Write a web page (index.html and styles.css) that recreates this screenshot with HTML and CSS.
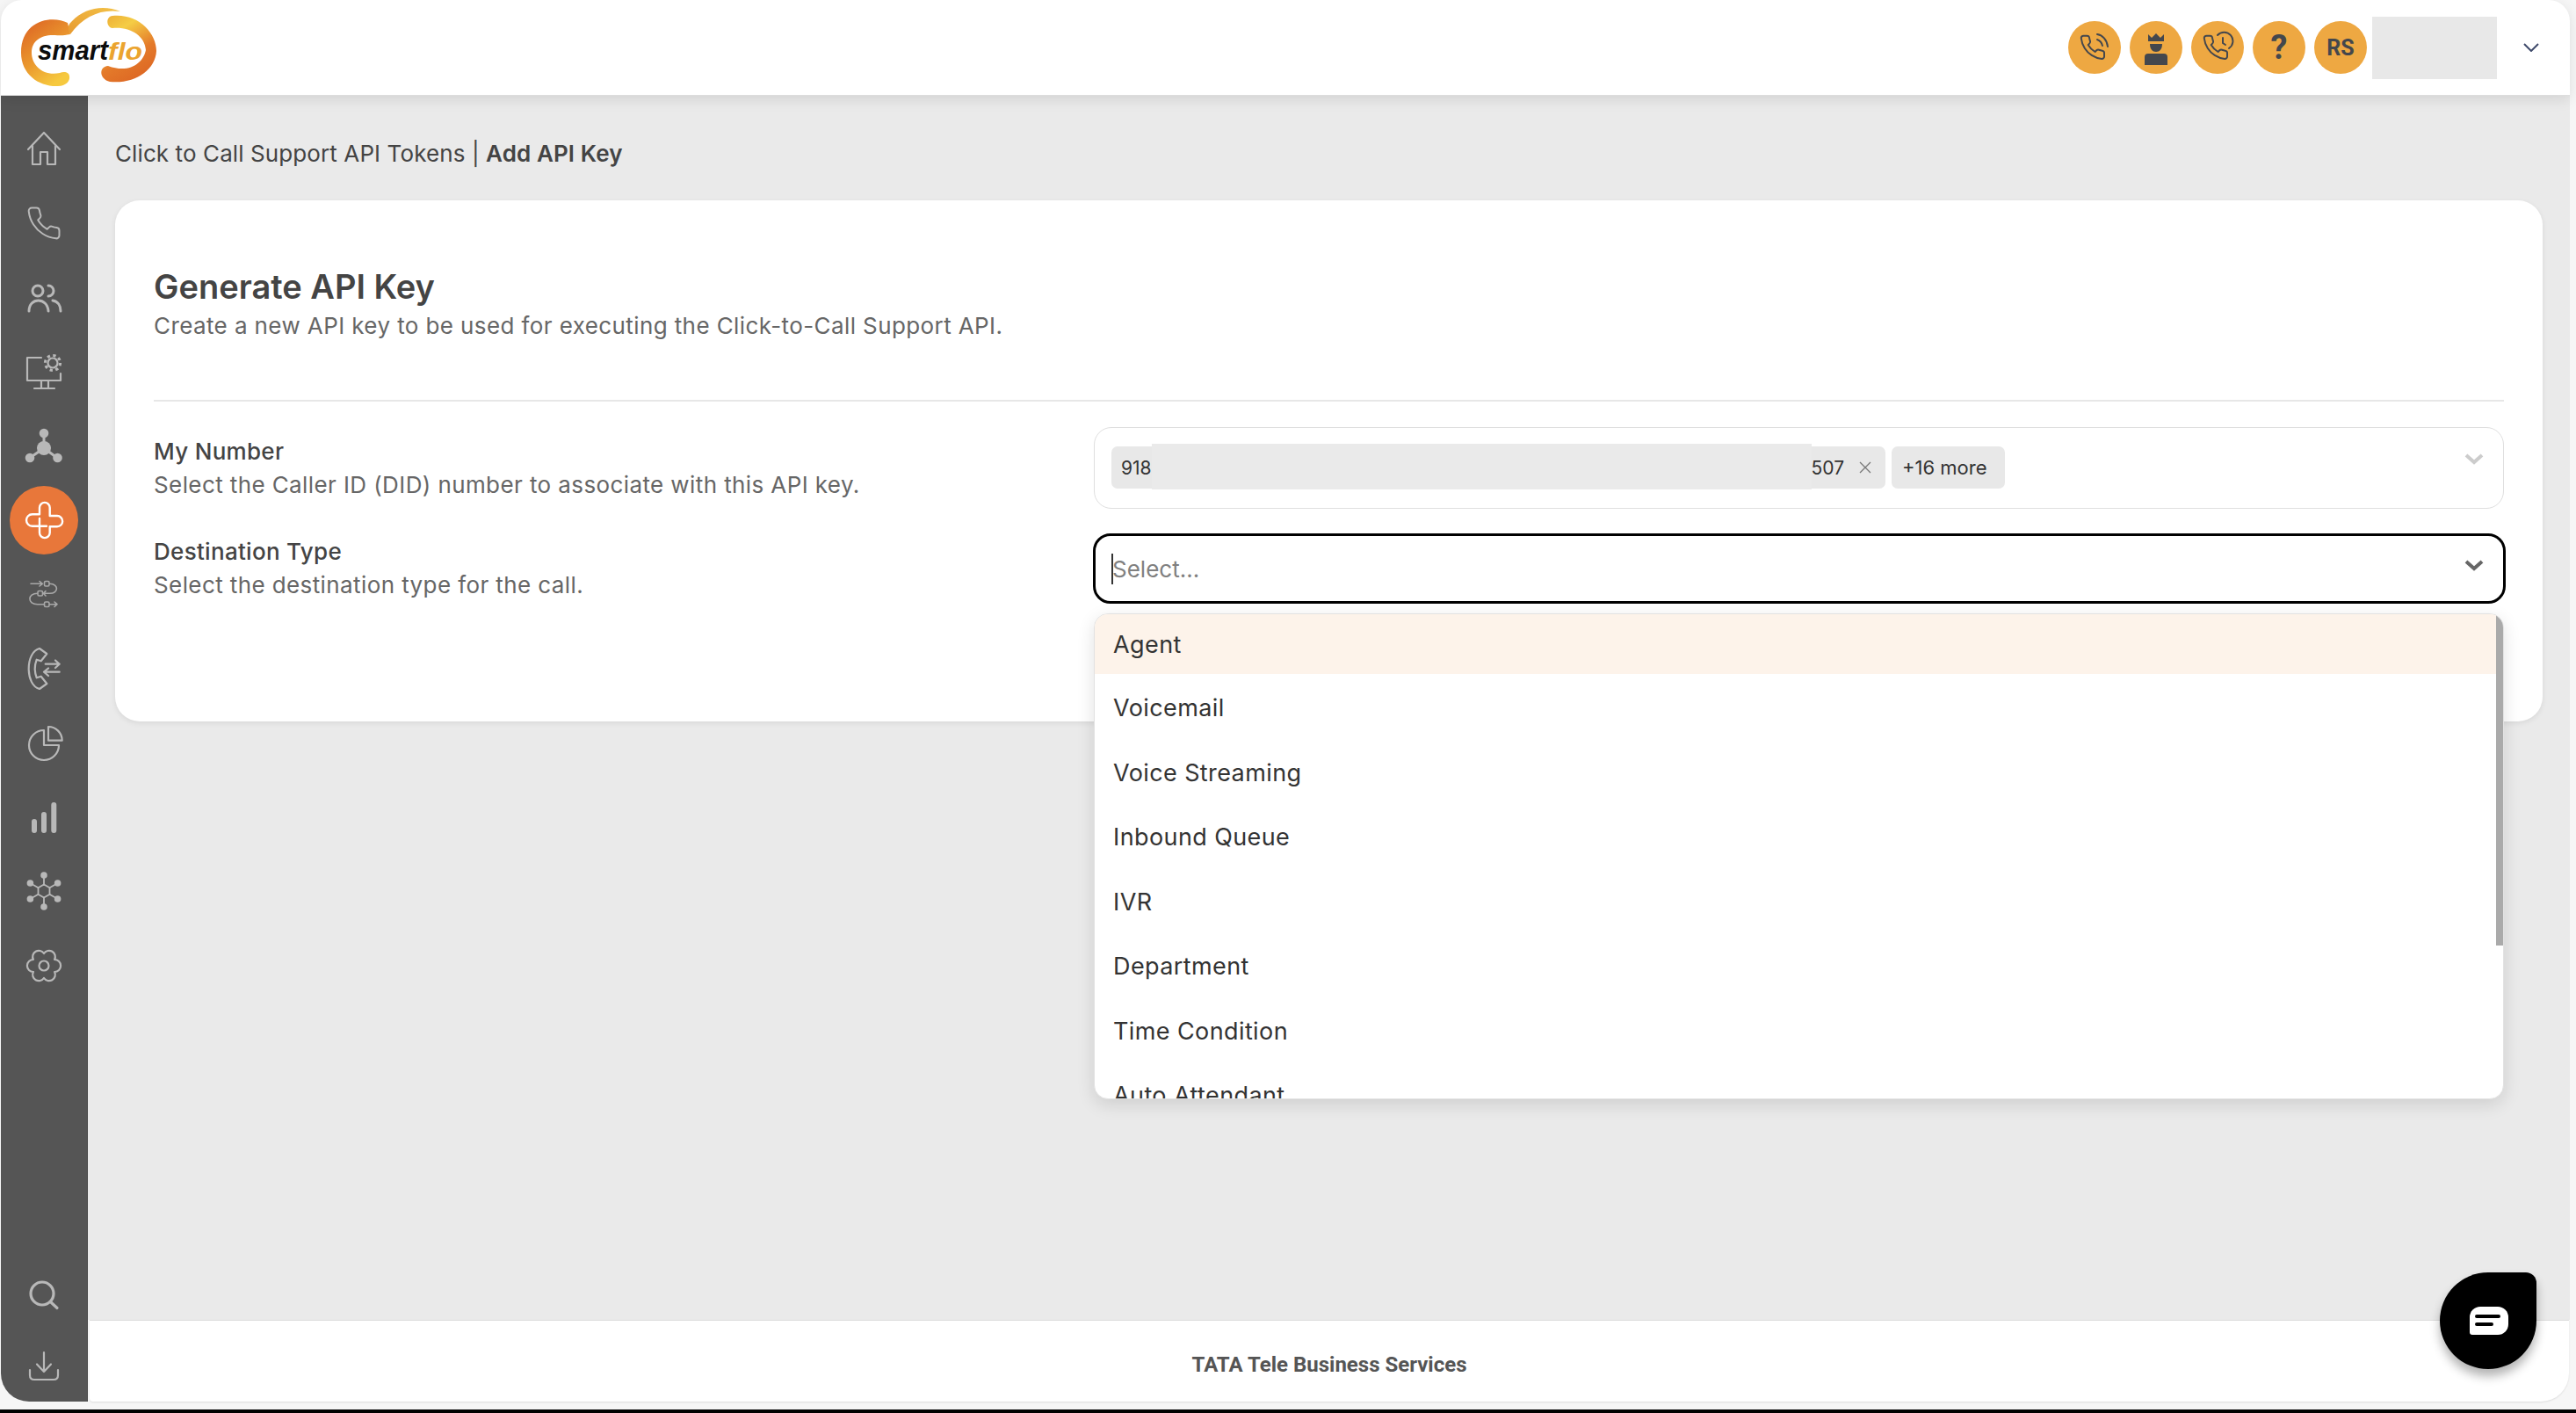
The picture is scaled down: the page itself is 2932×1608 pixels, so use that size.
FILE: index.html
```html
<!DOCTYPE html>
<html lang="en">
<head>
    <meta charset="UTF-8">
    <title>Add API Key</title>
    <link rel="stylesheet" href="styles.css">
</head>
<body>
    <div class="window">
        <header class="topbar">
            <svg class="logo" viewBox="0 0 200 109" width="200" height="109">
                <defs>
                    <linearGradient id="logoLeft" x1="0.1" y1="0.1" x2="0.6" y2="1">
                        <stop offset="0" stop-color="#de6a25"/>
                        <stop offset="0.55" stop-color="#eb9a2e"/>
                        <stop offset="1" stop-color="#f6c93f"/>
                    </linearGradient>
                    <linearGradient id="logoSwoosh" x1="0" y1="1" x2="1" y2="0">
                        <stop offset="0" stop-color="#e79a30"/>
                        <stop offset="1" stop-color="#f3c247"/>
                    </linearGradient>
                    <linearGradient id="logoRight" x1="0" y1="0" x2="0.5" y2="1">
                        <stop offset="0" stop-color="#eba934"/>
                        <stop offset="0.3" stop-color="#f5cd45"/>
                        <stop offset="0.7" stop-color="#e47a2a"/>
                        <stop offset="1" stop-color="#de6a25"/>
                    </linearGradient>
                </defs>
                <path fill="url(#logoLeft)" d="M80 39C70 41 68 40 60 40C46 40 36 47 36 60C36 75 50 87 68 83C73 81 79 82 79 87C80 92 75 98 66 98C45 99 24 85 24 60C24 22 60 17 77 26Z"/>
                <path fill="url(#logoSwoosh)" d="M80 39C76 30 78 28 82 24C96 9 118 5 137 13C115 10 95 18 80 39Z"/>
                <path fill="url(#logoRight)" d="M128 18C157 15 178 37 178 58C177 80 153 96 125 93C113 90 112 76 123 75C147 84 163 72 166 57C165 40 147 30 128 32C121 31 120 19 128 18Z"/>
                <text class="logo-smart" x="43" y="68" textLength="80" lengthAdjust="spacingAndGlyphs">smart</text>
                <text class="logo-flo" x="123" y="68" textLength="39" lengthAdjust="spacingAndGlyphs">flo</text>
            </svg>
            <div class="topbar-right">
                <span class="round-btn">
                    <svg viewBox="0 0 60 60" width="60" height="60" class="dark-line">
                        <path transform="translate(12 14) scale(1.32)" d="M22 16.92v3a2 2 0 0 1-2.18 2 19.79 19.79 0 0 1-8.63-3.07 19.5 19.5 0 0 1-6-6 19.79 19.79 0 0 1-3.07-8.67A2 2 0 0 1 4.11 2h3a2 2 0 0 1 2 1.72 12.84 12.84 0 0 0 .7 2.81 2 2 0 0 1-.45 2.11L8.09 9.91a16 16 0 0 0 6 6l1.27-1.27a2 2 0 0 1 2.11-.45 12.84 12.84 0 0 0 2.81.7A2 2 0 0 1 22 16.92z"/>
                        <path d="M33 15C39 16 44 21 45 29"/>
                        <path d="M33 21C36 22 38 24 39 28"/>
                    </svg>
                </span>
                <span class="round-btn">
                    <svg viewBox="0 0 60 60" width="60" height="60" class="dark-fill">
                        <path d="M21 15L25 19L30 14L35 19L39 15V23H21Z"/>
                        <path d="M23 26H37C37 32 34 35 30 35C26 35 23 32 23 26Z"/>
                        <path d="M17 50V41Q17 37 21 37H39Q43 37 43 41V50Z"/>
                    </svg>
                </span>
                <span class="round-btn">
                    <svg viewBox="0 0 60 60" width="60" height="60" class="dark-line">
                        <path transform="translate(12 14) scale(1.32)" d="M22 16.92v3a2 2 0 0 1-2.18 2 19.79 19.79 0 0 1-8.63-3.07 19.5 19.5 0 0 1-6-6 19.79 19.79 0 0 1-3.07-8.67A2 2 0 0 1 4.11 2h3a2 2 0 0 1 2 1.72 12.84 12.84 0 0 0 .7 2.81 2 2 0 0 1-.45 2.11L8.09 9.91a16 16 0 0 0 6 6l1.27-1.27a2 2 0 0 1 2.11-.45 12.84 12.84 0 0 0 2.81.7A2 2 0 0 1 22 16.92z"/>
                        <path d="M30 16A10 10 0 1 1 43 31"/>
                        <path d="M36 19V25L39 27"/>
                    </svg>
                </span>
                <span class="round-btn round-help">?</span>
                <span class="round-btn round-text">RS</span>
                <span class="user-mask"></span>
                <svg class="user-chevron" viewBox="0 0 18 10" width="18" height="10"><path d="M1 1L9 9L17 1"/></svg>
            </div>
        </header>

        <div class="frame">
            <aside class="sidebar">
                <nav class="nav-top">
                    <a class="nav-item">
                        <svg viewBox="0 0 48 48" width="48" height="48"><path d="M6 25L24 6L42 25"/><path d="M11 21V42H20V28H28V42H37V21"/></svg>
                    </a>
                    <a class="nav-item">
                        <svg viewBox="0 0 48 48" width="48" height="48"><path transform="translate(3 3) scale(1.75)" stroke-width="1.15" d="M22 16.92v3a2 2 0 0 1-2.18 2 19.79 19.79 0 0 1-8.63-3.07 19.5 19.5 0 0 1-6-6 19.79 19.79 0 0 1-3.07-8.67A2 2 0 0 1 4.11 2h3a2 2 0 0 1 2 1.72 12.84 12.84 0 0 0 .7 2.81 2 2 0 0 1-.45 2.11L8.09 9.91a16 16 0 0 0 6 6l1.27-1.27a2 2 0 0 1 2.11-.45 12.84 12.84 0 0 0 2.81.7A2 2 0 0 1 22 16.92z"/></svg>
                    </a>
                    <a class="nav-item">
                        <svg class="medium" viewBox="0 0 48 48" width="48" height="48"><circle cx="17" cy="17" r="6"/><path d="M7 40C7 24 28 24 29 40"/><path d="M29 11A6 6 0 0 1 29 23"/><path d="M34 28C40 29 43 34 43 40"/></svg>
                    </a>
                    <a class="nav-item">
                        <svg viewBox="0 0 48 48" width="48" height="48"><path d="M21 8H5V34H43V26"/><path d="M21 34V43M29 34V43M13 43H36"/><circle cx="34" cy="14" r="5.5"/><circle class="gear-teeth" cx="34" cy="14" r="8.5"/></svg>
                    </a>
                    <a class="nav-item">
                        <svg class="solid" viewBox="0 0 48 48" width="48" height="48"><path class="solid-link" d="M24 10V27L8 38M24 27L39 38"/><circle cx="24" cy="27" r="8"/><circle cx="24" cy="10" r="5.3"/><circle cx="8" cy="38" r="5.3"/><circle cx="39.500" cy="38" r="5.3"/></svg>
                    </a>
                    <a class="nav-item nav-active">
                        <svg viewBox="0 0 48 48" width="48" height="48"><path d="M27 30.700H10.700A6.700 6.700 0 0 1 10.700 17.300H19V9.700A5.850 5.850 0 0 1 30.700 9.700V19H39A6.150 6.150 0 0 1 39 31.300H30.700V38.300A5.850 5.850 0 0 1 19 38.300V22"/></svg>
                    </a>
                    <a class="nav-item">
                        <svg class="thin" viewBox="0 0 48 48" width="48" height="48"><path d="M9 12.300H22M19 9.500L22.300 12.300L19 15"/><rect x="24.500" y="9.500" width="5.500" height="5.500" rx="1.500"/><path d="M30.700 12.300C41 12.300 41 23.300 30.700 23.300H23.300M26 20.700L23.300 23.300L26 26"/><rect x="17" y="20.500" width="5.500" height="5.500" rx="1.500"/><path d="M16.700 23.300C5 23.300 5 35.700 16.700 35.700H24.500"/><rect x="24.500" y="33" width="5.500" height="5.500" rx="1.500"/><path d="M30.500 35.700H39M36 33L39 35.700L36 38.500"/></svg>
                    </a>
                    <a class="nav-item">
                        <svg viewBox="0 0 48 48" width="48" height="48"><path d="M19 1C11 3 6.700 13 6.700 24C6.700 35 11 45 19 47L27.300 41L20.700 32.700L15.700 34.300C13.300 28 13.300 20 15.700 13.700L20.700 15.300L27.300 7Z"/><path d="M25.700 18.700H41.700M37 14.500L41.700 18.700L37 23"/><path d="M41.700 27.700H24M29 23.500L24 27.700L29 32"/></svg>
                    </a>
                    <a class="nav-item">
                        <svg viewBox="0 0 48 48" width="48" height="48"><path d="M24 10A17 17 0 1 0 41 27H24Z"/><path d="M29 6A15.700 15.700 0 0 1 44.700 21.700H29Z"/></svg>
                    </a>
                    <a class="nav-item">
                        <svg class="bars" viewBox="0 0 48 48" width="48" height="48"><path d="M13 29V39M24 21V39M35.300 10V39"/></svg>
                    </a>
                    <a class="nav-item">
                        <svg viewBox="0 0 48 48" width="48" height="48"><path stroke-width="1.800" d="M24 16.500L30.500 20.250V27.750L24 31.500L17.500 27.750V20.250Z"/><path stroke-width="1.800" d="M24 16.500V6M30.500 20.250L39.600 15M30.500 27.750L39.600 33M24 31.500V42M17.500 27.750L8.400 33M17.500 20.250L8.400 15"/><g class="node-dots"><circle cx="24" cy="6" r="3.800"/><circle cx="39.600" cy="15" r="3.800"/><circle cx="39.600" cy="33" r="3.800"/><circle cx="24" cy="42" r="3.800"/><circle cx="8.400" cy="33" r="3.800"/><circle cx="8.400" cy="15" r="3.800"/></g></svg>
                    </a>
                    <a class="nav-item">
                        <svg viewBox="0 0 48 48" width="48" height="48"><path d="M36.100 17A7 7 0 0 1 36.100 31A7 7 0 0 1 24 38A7 7 0 0 1 11.900 31A7 7 0 0 1 11.900 17A7 7 0 0 1 24 10A7 7 0 0 1 36.100 17Z"/><circle cx="24" cy="24" r="5.500"/></svg>
                    </a>
                </nav>
                <nav class="nav-bottom">
                    <a class="nav-item nav-item-low">
                        <svg class="heavy" viewBox="0 0 48 48" width="48" height="48"><circle cx="22" cy="23" r="13"/><path d="M32 33L39 39.500"/></svg>
                    </a>
                    <a class="nav-item nav-item-low">
                        <svg viewBox="0 0 48 48" width="48" height="48"><path d="M24 9V31M16 22.500L24 31L32 22.500"/><path d="M8 29V35Q8 40 13 40H35Q40 40 40 35V29"/></svg>
                    </a>
                </nav>
            </aside>

            <div class="main">
                <main class="content">
                    <div class="breadcrumb">Click to Call Support API Tokens | <b>Add API Key</b></div>
                    <section class="card">
                        <h1>Generate API Key</h1>
                        <p class="lead">Create a new API key to be used for executing the Click-to-Call Support API.</p>
                        <hr class="divider">
                        <div class="form-row">
                            <div class="field-text">
                                <label>My Number</label>
                                <p>Select the Caller ID (DID) number to associate with this API key.</p>
                            </div>
                            <div class="select-box">
                                <span class="chip chip-number">
                                    <span>918</span>
                                    <span class="number-mask"></span>
                                    <span>507</span>
                                    <svg class="chip-x" viewBox="0 0 16 16" width="16" height="16"><path d="M2 2L14 14M14 2L2 14"/></svg>
                                </span>
                                <span class="chip">+16 more</span>
                                <svg class="select-chevron chevron-light" viewBox="0 0 22 13" width="22" height="13"><path d="M2 2L11 10L20 2"/></svg>
                            </div>
                        </div>
                        <div class="form-row">
                            <div class="field-text">
                                <label>Destination Type</label>
                                <p>Select the destination type for the call.</p>
                            </div>
                            <div class="select-wrap">
                                <div class="select-box select-focus">
                                    <span class="caret"></span>
                                    <span class="placeholder">Select...</span>
                                    <svg class="select-chevron" viewBox="0 0 22 13" width="22" height="13"><path d="M2 2L11 10L20 2"/></svg>
                                </div>
                                <div class="menu">
                                    <ul class="menu-list">
                                        <li class="menu-current">Agent</li>
                                        <li>Voicemail</li>
                                        <li>Voice Streaming</li>
                                        <li>Inbound Queue</li>
                                        <li>IVR</li>
                                        <li>Department</li>
                                        <li>Time Condition</li>
                                        <li>Auto Attendant</li>
                                    </ul>
                                    <div class="menu-scroll"><div class="menu-thumb"></div></div>
                                </div>
                            </div>
                        </div>
                    </section>
                </main>
                <footer class="footer">TATA Tele Business Services</footer>
            </div>
        </div>
    </div>
    <div class="black-edge"></div>

    <button class="chat-btn">
        <svg viewBox="0 0 44 33" width="44" height="33"><path class="chat-bubble" d="M12 0H32A12 12 0 0 1 44 12V20A12 12 0 0 1 32 32H3A3 3 0 0 1 0 29V12A12 12 0 0 1 12 0Z"/><path class="chat-lines" d="M8 11H33M8 20H25"/></svg>
    </button>
</body>
</html>
```

FILE: styles.css
```css
* {
    box-sizing: border-box;
}
html, body {
    margin: 0;
    height: 1608px;
    overflow: hidden;
}
body {
    background-color: #f6f6f6;
    font-family: "Inter", "Open Sans", sans-serif;
    color: #444;
}
.window {
    width: 2924px;
    height: 1595px;
    margin-left: 1px;
    display: flex;
    flex-direction: column;
}
.black-edge {
    height: 4px;
    margin-top: 9px;
    background-color: #000;
}

/* top bar */
.topbar {
    height: 109px;
    flex: none;
    display: flex;
    justify-content: space-between;
    align-items: center;
    background-color: #fff;
    border-radius: 24px 24px 0 0;
    border-bottom: 1px solid #ddd;
    position: relative;
    z-index: 2;
    box-shadow: 0 4px 16px rgba(0, 0, 0, 0.1);
}
.logo {
    display: block;
    margin-left: -1px;
}
.logo-smart {
    font-family: "Liberation Sans", sans-serif;
    font-size: 31px;
    font-weight: bold;
    font-style: italic;
    fill: #0c0c0c;
}
.logo-flo {
    font-family: "Liberation Sans", sans-serif;
    font-size: 27px;
    font-weight: bold;
    font-style: italic;
    fill: #eba42f;
}
.topbar-right {
    display: flex;
    align-items: center;
    gap: 10px;
    padding-right: 35px;
}
.round-btn {
    width: 60px;
    height: 60px;
    border-radius: 50%;
    background-color: #eea842;
    display: flex;
    align-items: center;
    justify-content: center;
    color: #44474d;
    font-family: "Roboto", sans-serif;
    font-weight: bold;
}
.round-help {
    font-size: 38px;
}
.round-text {
    font-size: 25px;
}
.dark-line path {
    fill: none;
    stroke: #44474d;
    stroke-width: 2;
    stroke-linecap: round;
    stroke-linejoin: round;
}
.dark-line path[transform] {
    stroke-width: 1.5;
}
.dark-fill path {
    fill: #44474d;
}
.user-mask {
    width: 142px;
    height: 71px;
    margin-left: -4px;
    background-color: #e8e8e8;
}
.user-chevron {
    margin-left: 20px;
}
.user-chevron path {
    fill: none;
    stroke: #3f4a6b;
    stroke-width: 2;
}

/* sidebar */
.frame {
    flex: 1;
    display: flex;
    min-height: 0;
}
.sidebar {
    width: 99px;
    flex: none;
    display: flex;
    flex-direction: column;
    justify-content: space-between;
    background-color: #555;
    border-right: 1px solid #474747;
    border-radius: 0 0 0 32px;
}
.nav-top {
    padding-top: 18px;
}
.nav-bottom {
    padding-bottom: 1px;
}
.nav-item {
    height: 84.5px;
    display: flex;
    align-items: center;
    justify-content: center;
}
.nav-item-low {
    height: 81px;
}
.nav-item svg {
    fill: none;
    stroke: #b8b8b8;
    stroke-width: 2.2;
    stroke-linecap: round;
    stroke-linejoin: round;
}
.nav-active {
    position: relative;
}
.nav-active::before {
    content: "";
    position: absolute;
    width: 78px;
    height: 78px;
    border-radius: 50%;
    background-color: #e8773a;
}
.nav-item.nav-active svg {
    position: relative;
    stroke: #fff;
    stroke-width: 2.4;
}
.nav-item svg.solid {
    fill: #b8b8b8;
    stroke: none;
}
.nav-item svg.solid .solid-link {
    fill: none;
    stroke: #b8b8b8;
    stroke-width: 3;
}
.gear-teeth {
    stroke-width: 3.2;
    stroke-linecap: butt;
    stroke-dasharray: 3.3 3.38;
}
.nav-item svg.thin {
    stroke: #a8a8a8;
    stroke-width: 1.6;
}
.nav-item svg.medium {
    stroke-width: 3;
}
.nav-item svg.bars {
    stroke-width: 6;
}
.nav-item svg.heavy {
    stroke-width: 3.2;
}
.node-dots {
    fill: #b8b8b8;
    stroke: none;
}

/* main */
.main {
    flex: 1;
    display: flex;
    flex-direction: column;
    min-width: 0;
}
.content {
    flex: 1;
    background-color: #eaeaea;
    padding: 0 31px;
}
.breadcrumb {
    height: 119px;
    padding-top: 46px;
    font-size: 26px;
    letter-spacing: 0.1px;
    line-height: 40px;
    color: #444;
}
.breadcrumb b {
    font-weight: 600;
}
.card {
    background-color: #fff;
    border-radius: 28px;
    padding: 74px 44px 134px;
    box-shadow: 0 2px 6px rgba(0, 0, 0, 0.08);
}
.card h1 {
    margin: 0;
    font-size: 38px;
    line-height: 48px;
    font-weight: 600;
    color: #444;
}
.lead {
    margin: 1px 0 0;
    font-size: 26px;
    letter-spacing: 0.4px;
    line-height: 40px;
    color: #666;
}
.divider {
    margin: 64px 0 29px;
    border: none;
    border-top: 2px solid #e7e7e7;
}
.form-row {
    display: grid;
    grid-template-columns: 1070px 1fr;
    align-items: center;
    margin-bottom: 28px;
}
.form-row:last-child {
    margin-bottom: 0;
}
.select-wrap {
    position: relative;
}
.field-text label {
    display: block;
    font-size: 26px;
    letter-spacing: 0.3px;
    line-height: 38px;
    font-weight: 500;
    color: #444;
}
.field-text p {
    margin: 0;
    font-size: 26px;
    letter-spacing: 0.4px;
    line-height: 38px;
    color: #666;
}
.select-box {
    height: 93px;
    display: flex;
    align-items: center;
    gap: 7px;
    padding: 0 19px 0 19px;
    background-color: #fff;
    border: 1px solid #dfdfdf;
    border-radius: 20px;
    position: relative;
}
.chip {
    height: 48px;
    display: flex;
    align-items: center;
    padding: 0 20px 0 12px;
    margin-top: -1px;
    background-color: #e8e8e8;
    border-radius: 7px;
    font-size: 22px;
    color: #333;
    white-space: nowrap;
}
.chip-number {
    width: 881px;
    padding: 0 9px 0 11px;
    font-size: 21px;
}
.number-mask {
    width: 751px;
    height: 52px;
    margin: -3px 0 0 0;
    flex: none;
    background-color: #eaeaea;
}
.chip-x {
    margin-left: 16px;
}
.chip-x path {
    fill: none;
    stroke: #777;
    stroke-width: 1.3;
}
.select-chevron {
    position: absolute;
    right: 22px;
    top: 29px;
}
.select-chevron path {
    fill: none;
    stroke: #666;
    stroke-width: 4;
}
.chevron-light path {
    stroke: #ccc;
}
.select-focus {
    height: 80px;
    margin: 0 -2px 0 -1px;
    border: 3px solid #000;
    padding-left: 18px;
    gap: 0;
}
.select-focus .select-chevron {
    right: 22px;
    top: 27px;
}
.caret {
    width: 2px;
    height: 35px;
    background-color: #333;
}
.placeholder {
    font-size: 26px;
    color: #808080;
    margin-left: -1px;
}

/* dropdown over the page */
.menu {
    position: absolute;
    top: 91px;
    left: 0;
    right: 0;
    height: 553px;
    display: flex;
    background-color: #fff;
    border: 1px solid #e2e2e2;
    border-radius: 16px;
    overflow: hidden;
    z-index: 3;
    box-shadow: 0 6px 20px rgba(0, 0, 0, 0.12);
}
.menu-list {
    flex: 1;
    margin: 0;
    padding: 0;
    list-style: none;
}
.menu-list li {
    height: 73.5px;
    display: flex;
    align-items: center;
    padding: 2px 0 0 21px;
    font-size: 27px;
    letter-spacing: 0.4px;
    color: #333;
}
.menu-list li.menu-current {
    height: 68px;
    margin-bottom: 1px;
    padding-top: 0;
    background-color: #fdf3ea;
}
.menu-scroll {
    width: 8px;
    flex: none;
}
.menu-thumb {
    height: 377px;
    background-color: #aaa;
}

/* footer */
.footer {
    height: 93px;
    flex: none;
    margin: 0 1px 0 2px;
    padding-top: 8px;
    display: flex;
    align-items: center;
    justify-content: center;
    background-color: #fff;
    border-top: 1px solid #ddd;
    border-radius: 0 0 32px 4px;
    box-shadow: 0 1px 2px rgba(0, 0, 0, 0.1);
    font-family: "Roboto", sans-serif;
    font-size: 24px;
    font-weight: bold;
    color: #555;
}

/* chat launcher */
.chat-btn {
    position: fixed;
    left: 2777px;
    top: 1448px;
    width: 110px;
    height: 110px;
    display: flex;
    align-items: center;
    justify-content: center;
    padding: 0 0 0 2px;
    border: none;
    border-radius: 50% 12px 50% 50%;
    background-color: #000;
    box-shadow: 0 8px 12px rgba(0, 0, 0, 0.3);
}
.chat-bubble {
    fill: #fff;
}
.chat-lines {
    fill: none;
    stroke: #000;
    stroke-width: 4;
    stroke-linecap: round;
}
```
